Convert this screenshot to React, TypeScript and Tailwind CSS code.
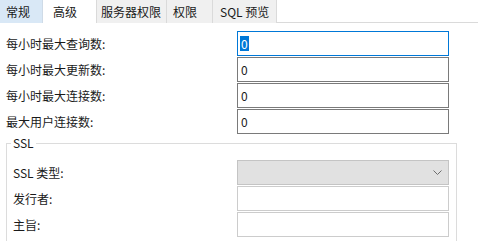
import React from "react";

const font = { fontFamily: '"Noto Sans CJK SC", "Noto Sans", sans-serif' };

function Tab({ label, w, cls, pl }: { label: string; w: string; cls: string; pl: string }) {
  return (
    <div className={`h-[23px] flex items-center ${w} ${pl} ${cls}`}>
      <span className="leading-none">{label}</span>
    </div>
  );
}

function Input({ value, focused }: { value?: string; focused?: boolean }) {
  return (
    <div
      className={`h-[25px] w-[212px] flex items-center pl-[2px] bg-white border ${
        focused ? "border-[#0078d7]" : "border-[#7a7a7a]"
      }`}
    >
      {value !== undefined &&
        (focused ? (
          <span className="bg-[#0078d7] text-white leading-[15px] px-[1px]">{value}</span>
        ) : (
          <span className="leading-[15px] px-[1px]">{value}</span>
        ))}
    </div>
  );
}

export default function App() {
  const rows = ["每小时最大查询数:", "每小时最大更新数:", "每小时最大连接数:", "最大用户连接数:"];
  return (
    <div className="w-[478px] h-[241px] overflow-hidden bg-white text-[12px] text-[#1a1a1a]" style={font}>
      <div className="flex h-[23px] border-b border-[#dadada]">
        <Tab label="常规" w="w-[43px]" pl="pl-[6px]" cls="bg-[#d9e8f6] border-r border-[#cfdbe7]" />
        <Tab label="高级" w="w-[53px]" pl="pl-[10px]" cls="bg-white h-[24px] -mb-px" />
        <Tab label="服务器权限" w="w-[71px]" pl="pl-[4px]" cls="bg-[#f0f0f0] border-l border-r border-[#dadada]" />
        <Tab label="权限" w="w-[46px]" pl="pl-[6px]" cls="bg-[#f0f0f0] border-r border-[#dadada]" />
        <Tab label="SQL 预览" w="w-[64px]" pl="pl-[7px]" cls="bg-[#f0f0f0] border-r border-[#dadada]" />
      </div>

      <div className="pt-[8px] pl-[6px] flex flex-col gap-[1px]">
        {rows.map((r, i) => (
          <div key={r} className="grid grid-cols-[231px_212px] items-center">
            <span>{r}</span>
            <Input value="0" focused={i === 0} />
          </div>
        ))}
      </div>

      <fieldset className="mt-[1px] ml-[6px] w-[451px] border border-[#dcdcdc] pl-[6px] pt-[9px] pb-[10px]">
        <legend className="-ml-[2px] px-[2px] leading-[16px]">SSL</legend>
        <div className="flex flex-col gap-[1px]">
          <div className="grid grid-cols-[224px_212px] items-center">
            <span>SSL 类型:</span>
            <div className="h-[25px] w-[212px] bg-[#e1e1e1] border border-[#c4c4c4] flex items-center justify-end pr-[6px]">
              <svg width="9" height="5" viewBox="0 0 9 5" fill="none">
                <path d="M0.5 0.5 L4.5 4.5 L8.5 0.5" stroke="#6d6d6d" strokeWidth="1" />
              </svg>
            </div>
          </div>
          <div className="grid grid-cols-[224px_212px] items-center">
            <span>发行者:</span>
            <div className="h-[25px] w-[212px] bg-white border border-[#cccccc]" />
          </div>
          <div className="grid grid-cols-[224px_212px] items-center">
            <span>主旨:</span>
            <div className="h-[25px] w-[212px] bg-white border border-[#cccccc]" />
          </div>
        </div>
      </fieldset>
    </div>
  );
}
